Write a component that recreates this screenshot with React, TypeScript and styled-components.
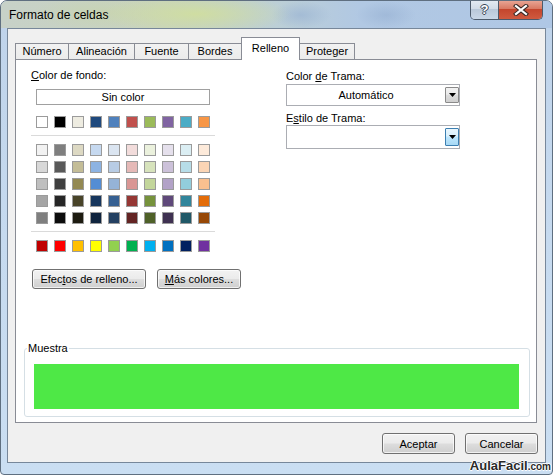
import React from "react";
import styled, { createGlobalStyle } from "styled-components";

const GlobalStyle = createGlobalStyle`
  html, body {
    margin: 0;
    padding: 0;
    background: #fff;
  }
  body {
    font-family: "Liberation Sans", Arial, sans-serif;
    font-size: 11px;
    color: #000;
  }
  #root {
    width: 553px;
    height: 475px;
    overflow: hidden;
  }
`;

const themeColors = [
  "#FFFFFF", "#000000", "#EEECE1", "#1F497D", "#4F81BD",
  "#C0504D", "#9BBB59", "#8064A2", "#4BACC6", "#F79646",
];

const tintColors = [
  ["#F2F2F2", "#7F7F7F", "#DDD9C3", "#C6D9F0", "#DBE5F1", "#F2DCDB", "#EBF1DD", "#E5E0EC", "#DBEEF3", "#FDEADA"],
  ["#D8D8D8", "#595959", "#C4BD97", "#8DB3E2", "#B8CCE4", "#E5B9B7", "#D7E3BC", "#CCC1D9", "#B7DDE8", "#FBD5B5"],
  ["#BFBFBF", "#3F3F3F", "#938953", "#548DD4", "#95B3D7", "#D99694", "#C3D69B", "#B2A2C7", "#92CDDC", "#FAC08F"],
  ["#A5A5A5", "#262626", "#494429", "#17365D", "#366092", "#953734", "#76923C", "#5F497A", "#31859B", "#E36C09"],
  ["#7F7F7F", "#0C0C0C", "#1D1B10", "#0F243E", "#244061", "#632423", "#4F6128", "#3F3151", "#205867", "#974806"],
];

const standardColors = [
  "#C00000", "#FF0000", "#FFC000", "#FFFF00", "#92D050",
  "#00B050", "#00B0F0", "#0070C0", "#002060", "#7030A0",
];

const tabs = [
  { label: "Número", w: 54 },
  { label: "Alineación", w: 67 },
  { label: "Fuente", w: 55 },
  { label: "Bordes", w: 54 },
  { label: "Relleno", w: 59, active: true },
  { label: "Proteger", w: 56 },
];

const Window = styled.div`
  position: relative;
  width: 553px;
  height: 475px;
  box-sizing: border-box;
  display: flex;
  flex-direction: column;
  border: 1px solid #5f6f80;
  border-radius: 7px 7px 4px 4px;
  background: linear-gradient(180deg, #bfd3ea 0%, #c6daef 50%, #cadef2 100%);
  overflow: hidden;
`;

const TitleBar = styled.div`
  height: 27px;
  display: flex;
  align-items: flex-start;
  background:
    radial-gradient(ellipse 95px 20px at 195px 13px, rgba(208, 222, 160, 0.95), rgba(208, 222, 160, 0)),
    radial-gradient(ellipse 70px 16px at 100px 12px, rgba(200, 212, 176, 0.8), rgba(200, 212, 176, 0)),
    radial-gradient(ellipse 30px 14px at 300px 14px, rgba(150, 176, 210, 0.6), rgba(150, 176, 210, 0)),
    radial-gradient(ellipse 30px 14px at 385px 14px, rgba(150, 176, 210, 0.6), rgba(150, 176, 210, 0)),
    linear-gradient(90deg, #c7d1c8 0%, #c8d3be 30%, #bccfd6 50%, #b1c8e3 65%, #afc7e5 100%);
`;

const Title = styled.div`
  margin-left: 8px;
  padding-top: 7px;
  font-size: 12px;
  line-height: 14px;
  color: #000;
`;

const CaptionButtons = styled.div`
  margin-left: auto;
  margin-right: 9px;
  margin-top: -1px;
  display: flex;
  height: 19px;
  border: 1px solid #4c5a6b;
  border-top: none;
  border-radius: 0 0 5px 5px;
  overflow: hidden;
`;

const HelpButton = styled.div`
  width: 27px;
  display: flex;
  align-items: center;
  justify-content: center;
  border-right: 1px solid #4c5a6b;
  background: linear-gradient(180deg, #e4ebf3 0%, #d2dce8 45%, #b9c8d9 50%, #c9d7e7 100%);
  color: #fff;
  font-weight: bold;
  font-size: 13px;
  line-height: 13px;
  text-shadow: 1px 0 0 #3a4656, -1px 0 0 #3a4656, 0 1px 0 #3a4656, 0 -1px 0 #3a4656;
`;

const CloseButton = styled.div`
  width: 43px;
  display: flex;
  align-items: center;
  justify-content: center;
  background: linear-gradient(180deg, #eaa999 0%, #d97a64 45%, #c4462d 50%, #cf5a3f 100%);
`;

const Client = styled.div`
  flex: 1;
  margin: 0 6px 11px 6px;
  border: 1px solid #77879a;
  background: #f0f0f0;
  display: flex;
  flex-direction: column;
  padding: 8px 8px 8px 7px;
`;

const TabRow = styled.div`
  position: relative;
  z-index: 1;
  height: 22px;
  display: flex;
  align-items: flex-end;
`;

const Tab = styled.div<{ $w: number; $active?: boolean }>`
  box-sizing: border-box;
  flex-shrink: 0;
  width: ${({ $w }) => $w}px;
  height: ${({ $active }) => ($active ? 23 : 16)}px;
  margin-left: -1px;
  margin-bottom: ${({ $active }) => ($active ? -1 : 0)}px;
  padding-top: ${({ $active }) => ($active ? 3 : 0)}px;
  border: 1px solid #898c95;
  border-bottom: none;
  background: ${({ $active }) => ($active ? "#fff" : "linear-gradient(180deg, #f2f2f2 0%, #ebebeb 100%)")};
  text-align: center;
  line-height: 14px;
  &:first-child {
    margin-left: 0;
  }
`;

const Panel = styled.div`
  flex: 1;
  border: 1px solid #898c95;
  background: #fff;
  display: flex;
  flex-direction: column;
  padding: 8px 6px 5px 15px;
`;

const TopArea = styled.div`
  display: flex;
`;

const LeftColumn = styled.div`
  width: 184px;
  flex-shrink: 0;
  display: flex;
  flex-direction: column;
`;

const RightColumn = styled.div`
  width: 174px;
  margin-left: 71px;
  padding-top: 1px;
  display: flex;
  flex-direction: column;
`;

const Label = styled.div<{ $mt?: number }>`
  line-height: 14px;
  height: 14px;
  margin-top: ${({ $mt }) => $mt ?? 0}px;
  white-space: nowrap;
`;

const Key = styled.span`
  text-decoration: underline;
`;

const NoColorButton = styled.div`
  box-sizing: border-box;
  width: 174px;
  height: 16px;
  margin: 7px 0 0 5px;
  border: 1px solid #a0a0a0;
  background: #fff;
  text-align: center;
  line-height: 14px;
`;

const SwatchGrid = styled.div<{ $mt: number }>`
  display: grid;
  grid-template-columns: repeat(10, 12px);
  column-gap: 6px;
  row-gap: 5px;
  margin: ${({ $mt }) => $mt}px 0 0 5px;
`;

const Swatch = styled.div<{ $c: string }>`
  box-sizing: border-box;
  width: 12px;
  height: 12px;
  border: 1px solid #9b9b9b;
  background: ${({ $c }) => $c};
`;

const Separator = styled.div<{ $mt: number }>`
  height: 1px;
  margin-top: ${({ $mt }) => $mt}px;
  background: #dadada;
`;

const ButtonRow = styled.div`
  display: flex;
  gap: 11px;
  margin: 17px 0 0 1px;
`;

const PushButton = styled.div<{ $w: number; $h: number }>`
  box-sizing: border-box;
  flex-shrink: 0;
  width: ${({ $w }) => $w}px;
  height: ${({ $h }) => $h}px;
  border: 1px solid #707070;
  border-radius: 3px;
  background: linear-gradient(180deg, #f2f2f2 0%, #ebebeb 48%, #dddddd 52%, #cfcfcf 100%);
  box-shadow: inset 0 0 0 1px rgba(255, 255, 255, 0.7);
  display: flex;
  align-items: center;
  justify-content: center;
  white-space: nowrap;
`;

const Combo = styled.div<{ $h: number; $mt?: number }>`
  box-sizing: border-box;
  height: ${({ $h }) => $h}px;
  margin-top: ${({ $mt }) => $mt ?? 0}px;
  border: 1px solid #abadb3;
  background: #fff;
  display: flex;
  padding: 2px 0 2px 0;
`;

const ComboText = styled.div`
  flex: 1;
  display: flex;
  align-items: center;
  justify-content: center;
`;

const ComboArrow = styled.div<{ $hot?: boolean }>`
  box-sizing: border-box;
  width: 14px;
  border: 1px solid ${({ $hot }) => ($hot ? "#3c7fb1" : "#8a8a8a")};
  border-radius: 1px;
  background: ${({ $hot }) =>
    $hot
      ? "linear-gradient(180deg, #eaf6fd 0%, #d9f0fc 45%, #bee6fd 50%, #a7d9f5 100%)"
      : "linear-gradient(180deg, #f2f2f2 0%, #ebebeb 45%, #dddddd 50%, #cfcfcf 100%)"};
  display: flex;
  align-items: center;
  justify-content: center;
`;

const Group = styled.fieldset`
  margin: auto 0 0 -7px;
  min-width: 0;
  border: 1px solid #d5dfe5;
  border-radius: 3px;
  padding: 9px 10px 7px 9px;
`;

const Legend = styled.legend`
  padding: 0 1px;
  margin-left: -7px;
  line-height: 14px;
  font-size: 11px;
`;

const Sample = styled.div`
  height: 45px;
  background: #4ee846;
`;

const DialogButtons = styled.div`
  display: flex;
  justify-content: flex-end;
  gap: 10px;
  margin: 10px -1px 0 0;
`;

const Watermark = styled.div`
  position: absolute;
  right: 1px;
  bottom: 0px;
  font-weight: bold;
  font-size: 13px;
  line-height: 14px;
  color: #2a2a2a;
  text-shadow: 1px 0 0 #fff, -1px 0 0 #fff, 0 1px 0 #fff, 0 -1px 0 #fff;
  white-space: nowrap;
`;

const WatermarkSmall = styled.span`
  font-size: 10px;
`;

const ArrowIcon = () => (
  <svg width="7" height="4" viewBox="0 0 7 4">
    <polygon points="0,0 7,0 3.5,4" fill="#000" />
  </svg>
);

const CloseIcon = () => (
  <svg width="16" height="12" viewBox="0 0 16 12">
    <g strokeLinecap="square">
      <path d="M3 2 L13 10 M13 2 L3 10" stroke="#3b2a26" strokeWidth="4.2" />
      <path d="M3 2 L13 10 M13 2 L3 10" stroke="#ffffff" strokeWidth="2.2" />
    </g>
  </svg>
);

export default function App() {
  return (
    <>
      <GlobalStyle />
      <Window>
        <TitleBar>
          <Title>Formato de celdas</Title>
          <CaptionButtons>
            <HelpButton>?</HelpButton>
            <CloseButton>
              <CloseIcon />
            </CloseButton>
          </CaptionButtons>
        </TitleBar>
        <Client>
          <TabRow>
            {tabs.map((t) => (
              <Tab key={t.label} $w={t.w} $active={t.active}>
                {t.label}
              </Tab>
            ))}
          </TabRow>
          <Panel>
            <TopArea>
              <LeftColumn>
                <Label>
                  <Key>C</Key>olor de fondo:
                </Label>
                <NoColorButton>Sin color</NoColorButton>
                <SwatchGrid $mt={11}>
                  {themeColors.map((c, i) => (
                    <Swatch key={i} $c={c} />
                  ))}
                </SwatchGrid>
                <Separator $mt={7} />
                <SwatchGrid $mt={8}>
                  {tintColors.flat().map((c, i) => (
                    <Swatch key={i} $c={c} />
                  ))}
                </SwatchGrid>
                <Separator $mt={7} />
                <SwatchGrid $mt={8}>
                  {standardColors.map((c, i) => (
                    <Swatch key={i} $c={c} />
                  ))}
                </SwatchGrid>
                <ButtonRow>
                  <PushButton $w={114} $h={20}>
                    Efec<Key>t</Key>os de relleno...
                  </PushButton>
                  <PushButton $w={84} $h={20}>
                    <Key>M</Key>ás colores...
                  </PushButton>
                </ButtonRow>
              </LeftColumn>
              <RightColumn>
                <Label>
                  Color <Key>d</Key>e Trama:
                </Label>
                <Combo $h={22} $mt={1}>
                  <ComboText>Automático</ComboText>
                  <ComboArrow>
                    <ArrowIcon />
                  </ComboArrow>
                </Combo>
                <Label $mt={5}>
                  E<Key>s</Key>tilo de Trama:
                </Label>
                <Combo $h={24}>
                  <ComboText />
                  <ComboArrow $hot>
                    <ArrowIcon />
                  </ComboArrow>
                </Combo>
              </RightColumn>
            </TopArea>
            <Group>
              <Legend>Muestra</Legend>
              <Sample />
            </Group>
          </Panel>
          <DialogButtons>
            <PushButton $w={73} $h={21}>Aceptar</PushButton>
            <PushButton $w={73} $h={21}>Cancelar</PushButton>
          </DialogButtons>
        </Client>
        <Watermark>
          AulaFacil<WatermarkSmall>.com</WatermarkSmall>
        </Watermark>
      </Window>
    </>
  );
}
